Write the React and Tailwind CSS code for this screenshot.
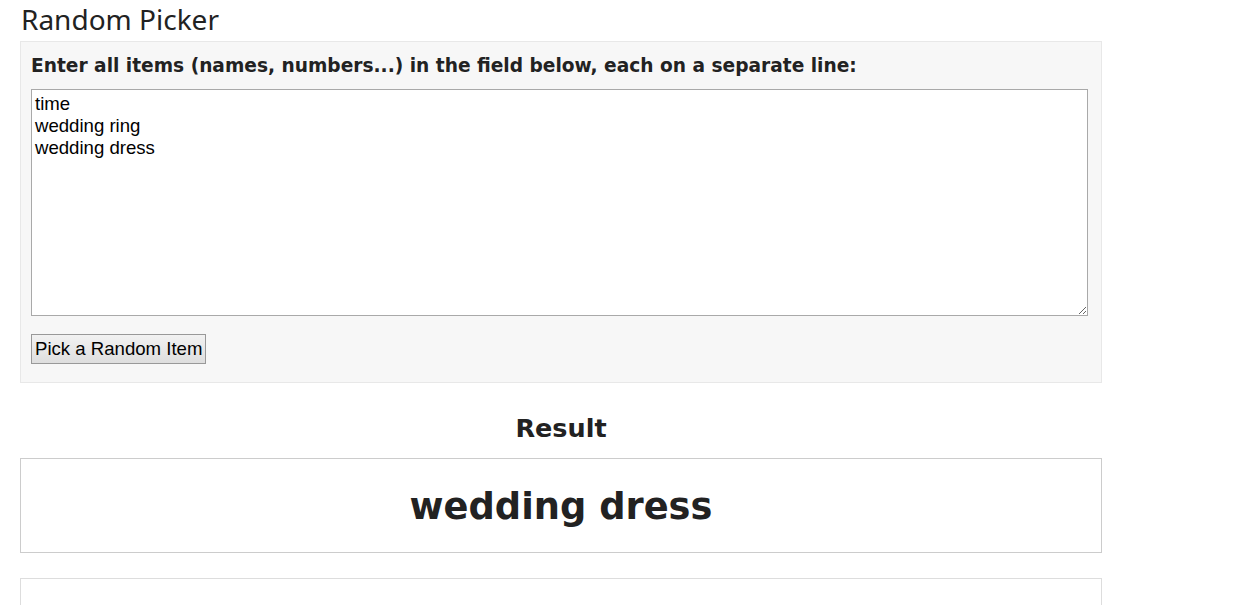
import React, { useState } from "react";

function App() {
	const [items, setItems] = useState("time\nwedding ring\nwedding dress");
	const [result, setResult] = useState("wedding dress");

	const pick = () => {
		const list = items.split("\n").map((s) => s.trim()).filter(Boolean);
		if (list.length) setResult(list[Math.floor(Math.random() * list.length)]);
	};

	return (
		<div className="min-h-screen bg-white text-[#222]">
			<div className="w-[1082px] ml-[20px]">
				<h1 className="pt-[2px] h-[41px] pl-[1px] text-[28px] leading-[35px] font-normal font-['Noto_Sans',sans-serif] text-[#222]">
					Random Picker
				</h1>
				<div className="border border-[#e8e8e8] bg-[#f7f7f7] px-[10px] pt-[10px] pb-[18px]">
					<label
						htmlFor="items"
						className="block h-[37px] pt-[1px] text-[18.6px] leading-[26px] font-bold font-['DejaVu_Sans',Verdana,sans-serif] text-[#222] whitespace-nowrap"
					>
						Enter all items (names, numbers...) in the field below, each on a separate line:
					</label>
					<textarea
						id="items"
						value={items}
						onChange={(e) => setItems(e.target.value)}
						className="block w-[1057px] h-[227px] border border-[#a9a9a9] bg-white px-[3px] pt-[3px] pb-[2px] text-[18.6px] leading-[22px] font-['Liberation_Sans',Arial,sans-serif] text-black resize-y outline-none"
					/>
					<button
						type="button"
						onClick={pick}
						className="mt-[18px] h-[30px] px-[3px] border border-[#999] bg-gradient-to-b from-[#f2f2f2] to-[#dedede] text-[18.6px] leading-[22px] font-['Liberation_Sans',Arial,sans-serif] text-black"
					>
						Pick a Random Item
					</button>
				</div>
				<h2 className="mt-[26px] h-[49px] text-center text-[25.5px] leading-[38px] font-bold font-['DejaVu_Sans',Verdana,sans-serif] text-[#222]">
					Result
				</h2>
				<div className="h-[95px] border border-[#ccc] flex items-center justify-center">
					<div className="pt-[3px] text-[36.8px] leading-[44px] font-bold font-['DejaVu_Sans',Verdana,sans-serif] text-[#222]">
						{result}
					</div>
				</div>
				<div className="mt-[25px] h-[60px] border border-[#ddd]"></div>
			</div>
		</div>
	);
}

export default App;
